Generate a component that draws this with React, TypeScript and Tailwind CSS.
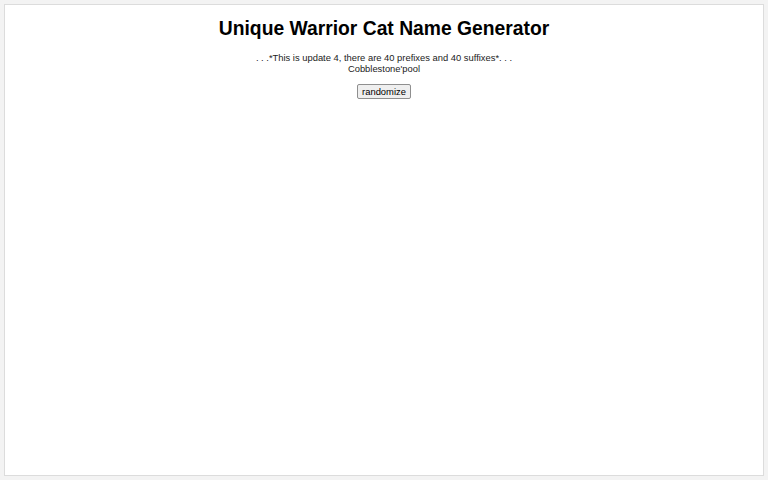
export default function App() {
  return (
    <div className="w-[768px] h-[480px] bg-[#f3f3f3] p-[4px]" style={{ fontFamily: '"Liberation Sans", Arial, sans-serif' }}>
      <div className="h-full bg-white border border-[#dcdcdc] flex flex-col items-center text-black">
        <h1 className="text-[19.3px] font-bold leading-none mt-[14px]">Unique Warrior Cat Name Generator</h1>
        <p className="text-[9.4px] leading-[11px] mt-[14px] text-center text-[#222]">
          . . .*This is update 4, there are 40 prefixes and 40 suffixes*. . .
          <br />
          Cobblestone'pool
        </p>
        <button className="mt-[10px] text-[9.4px] leading-[11px] px-[4px] py-[1px] bg-[#efefef] border border-[#8f8f8f] rounded-[2px]">
          randomize
        </button>
      </div>
    </div>
  );
}
